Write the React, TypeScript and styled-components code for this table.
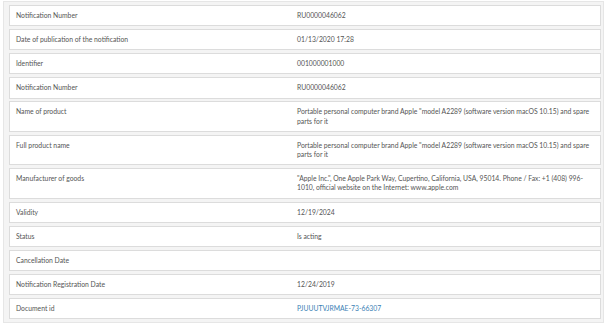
import styled, { createGlobalStyle } from 'styled-components'

const GlobalStyle = createGlobalStyle`
  html, body {
    margin: 0;
    padding: 0;
    background: #ffffff;
  }
  body {
    font-family: 'Lato', 'Open Sans', sans-serif;
  }
`

const Panel = styled.div`
  margin: 1px 5px 0 3px;
  padding: 3px 2px 3px 5px;
  border: 1px solid #e6e6e6;
  background: #f4f4f4;
  display: flex;
  flex-direction: column;
  gap: 2.8px;
`

const Row = styled.div`
  display: grid;
  grid-template-columns: 281px 1fr;
  background: #ffffff;
  border: 1px solid #dcdcdc;
`

const Cell = styled.div<{ $link?: boolean }>`
  padding: 5px 2px 5px 6px;
  min-height: 9.3px;
  font-size: 6.8px;
  line-height: 9.3px;
  color: ${(p) => (p.$link ? '#3a7fb5' : '#555555')};
`

type Item = { label: string; value: string; link?: boolean }

const items: Item[] = [
  { label: 'Notification Number', value: 'RU0000046062' },
  { label: 'Date of publication of the notification', value: '01/13/2020 17:28' },
  { label: 'Identifier', value: '001000001000' },
  { label: 'Notification Number', value: 'RU0000046062' },
  {
    label: 'Name of product',
    value:
      'Portable personal computer brand Apple "model A2289 (software version macOS 10.15) and spare parts for it',
  },
  {
    label: 'Full product name',
    value:
      'Portable personal computer brand Apple "model A2289 (software version macOS 10.15) and spare parts for it',
  },
  {
    label: 'Manufacturer of goods',
    value:
      '"Apple Inc.", One Apple Park Way, Cupertino, California, USA, 95014. Phone / Fax: +1 (408) 996-1010, official website on the Internet: www.apple.com',
  },
  { label: 'Validity', value: '12/19/2024' },
  { label: 'Status', value: 'Is acting' },
  { label: 'Cancellation Date', value: '' },
  { label: 'Notification Registration Date', value: '12/24/2019' },
  { label: 'Document id', value: 'PJUUUTVJRMAE-73-66307', link: true },
]

export default function App() {
  return (
    <>
      <GlobalStyle />
      <Panel>
        {items.map((it, i) => (
          <Row key={i}>
            <Cell>{it.label}</Cell>
            <Cell $link={it.link}>{it.value}</Cell>
          </Row>
        ))}
      </Panel>
    </>
  )
}
